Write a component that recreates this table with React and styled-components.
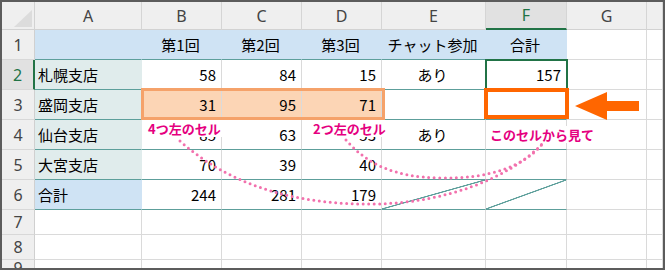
import React from "react";
import styled, { createGlobalStyle } from "styled-components";

const BLUE = "#cfe3f4";
const GRAYTEAL = "#e0ecec";
const ORANGE_FILL = "#fcd5b5";
const TEAL = "#5d9f9b";
const GRID = "#dadada";
const PINK = "#e5007f";

const GlobalStyle = createGlobalStyle`
  html, body { margin: 0; padding: 0; background: #fff; }
  body { width: 665px; height: 270px; overflow: hidden; }
`;

const Frame = styled.div`
  position: relative;
  width: 665px;
  height: 270px;
  box-sizing: border-box;
  border: 2px solid #5c5c5c;
  overflow: hidden;
  background: #fff;
  font-family: "Noto Sans CJK JP", "Noto Sans", sans-serif;
`;

const Sheet = styled.div`
  display: grid;
  grid-template-columns: 33px 107px 80px 80px 80px 104px 81px 80px 1fr;
  grid-template-rows: 28px repeat(6, 30px) 25px 25px 1fr;
  height: 100%;
`;

const Corner = styled.div`
  box-sizing: border-box;
  background: #efefef;
  border-right: 1px solid #d2d2d2;
  border-bottom: 1px solid #d2d2d2;
  display: flex;
  align-items: flex-end;
  justify-content: flex-end;
  padding: 0 2px 2px 0;
`;

const ColHead = styled.div`
  box-sizing: border-box;
  background: ${(p) => (p.$active ? "#e1e1e1" : "#efefef")};
  border-right: 1px solid #d5d5d5;
  border-bottom: ${(p) => (p.$active ? "2px solid #217346" : "1px solid #d2d2d2")};
  color: ${(p) => (p.$active ? "#217346" : "#444")};
  display: flex;
  align-items: center;
  justify-content: center;
  font-family: "Noto Sans", sans-serif;
  font-size: 16px;
  line-height: 1;
`;

const RowHead = styled.div`
  box-sizing: border-box;
  background: ${(p) => (p.$active ? "#e1e1e1" : "#efefef")};
  border-right: ${(p) => (p.$active ? "2px solid #217346" : "1px solid #d0d0d0")};
  border-bottom: 1px solid #d8d8d8;
  color: ${(p) => (p.$active ? "#217346" : "#444")};
  display: flex;
  align-items: center;
  justify-content: center;
  font-family: "Noto Sans", sans-serif;
  font-size: 16px;
  line-height: 1;
`;

const Cell = styled.div`
  position: relative;
  z-index: ${(p) => (p.$selected ? 2 : "auto")};
  box-sizing: border-box;
  background-color: ${(p) => p.$bg || "#fff"};
  background-image: ${(p) =>
    p.$diag
      ? `linear-gradient(to top left, transparent calc(50% - 0.9px), ${TEAL} calc(50% - 0.4px), ${TEAL} calc(50% + 0.4px), transparent calc(50% + 0.9px))`
      : "none"};
  border-right: 1px solid ${(p) => p.$vr || GRID};
  border-bottom: 1px solid ${(p) => p.$hr || GRID};
  outline: ${(p) => (p.$selected ? "2px solid #217346" : "none")};
  outline-offset: -1px;
  display: flex;
  align-items: center;
  justify-content: ${(p) => p.$align || "flex-start"};
  padding: 0 5px 1px 3px;
  font-size: 15px;
  line-height: 1;
  color: #000;
  white-space: nowrap;
`;

const Box = styled.div`
  position: absolute;
  z-index: 3;
  box-sizing: border-box;
  pointer-events: none;
  border: ${(p) => p.$w}px solid ${(p) => p.$color};
`;

const Label = styled.div`
  position: absolute;
  z-index: 5;
  background: #fff;
  color: ${PINK};
  font-family: "Noto Sans CJK JP", sans-serif;
  font-weight: 700;
  font-size: 13px;
  line-height: 17px;
  padding: 0 2px;
  white-space: nowrap;
`;

const Overlay = styled.svg`
  position: absolute;
  z-index: 4;
  left: 0;
  top: 0;
  pointer-events: none;
`;

const ArrowSvg = styled.svg`
  position: absolute;
  z-index: 4;
  left: 570px;
  top: 88px;
`;

const cols = ["A", "B", "C", "D", "E", "F", "G", "H"];

const data = [
  ["", "第1回", "第2回", "第3回", "チャット参加", "合計"],
  ["札幌支店", "58", "84", "15", "あり", "157"],
  ["盛岡支店", "31", "95", "71", "", ""],
  ["仙台支店", "85", "63", "53", "あり", ""],
  ["大宮支店", "70", "39", "40", "", ""],
  ["合計", "244", "281", "179", "", ""],
];

function cellSpec(r, c) {
  const inTable = r <= 6 && c <= 5;
  if (!inTable) return { text: "" };
  const text = data[r - 1][c];
  const spec = { text, hr: TEAL };
  if (r === 1) {
    spec.bg = BLUE;
    spec.vr = BLUE;
    spec.align = "center";
    return spec;
  }
  if (c === 0) {
    spec.bg = r === 6 ? BLUE : GRAYTEAL;
    spec.vr = spec.bg;
    spec.align = "flex-start";
    return spec;
  }
  spec.align = c === 4 ? "center" : "flex-end";
  if (r === 3 && c >= 1 && c <= 3) spec.bg = ORANGE_FILL;
  if (r === 6 && (c === 4 || c === 5)) spec.diag = true;
  if (r === 2 && c === 5) spec.selected = true;
  return spec;
}

export default function App() {
  const rows = [1, 2, 3, 4, 5, 6, 7, 8, 9];
  return (
    <>
      <GlobalStyle />
      <Frame>
        <Sheet>
          <Corner>
            <svg width="18" height="17" viewBox="0 0 18 17">
              <polygon points="18,0 18,17 0,17" fill="#dcdcdc" />
            </svg>
          </Corner>
          {cols.map((h) => (
            <ColHead key={h} $active={h === "F"}>
              {h === "H" ? "" : h}
            </ColHead>
          ))}
          {rows.map((r) => (
            <React.Fragment key={r}>
              <RowHead $active={r === 2}>{r}</RowHead>
              {cols.map((_, c) => {
                const s = cellSpec(r, c);
                return (
                  <Cell
                    key={c}
                    $bg={s.bg}
                    $vr={s.vr}
                    $hr={s.hr}
                    $align={s.align}
                    $diag={s.diag}
                    $selected={s.selected}
                  >
                    {s.text}
                  </Cell>
                );
              })}
            </React.Fragment>
          ))}
        </Sheet>

        <Box $w={3} $color="#f5a26a" style={{ left: 139, top: 86, width: 244, height: 32 }} />
        <Box $w={4} $color="#ff6600" style={{ left: 482, top: 86, width: 85, height: 31 }} />

        <Overlay width="661" height="266" viewBox="2 2 661 266">
          <g
            fill="none"
            stroke="#f271ad"
            strokeWidth="3"
            strokeLinecap="round"
            strokeDasharray="0 5.5"
          >
            <path d="M180 141 C 235 190, 305 205, 375 204 C 445 203, 510 178, 543 143" />
            <path d="M346 140 C 368 165, 395 177, 440 178 C 490 179, 525 166, 543 143" />
          </g>
        </Overlay>

        <Label style={{ left: 144, top: 118 }}>4つ左のセル</Label>
        <Label style={{ left: 309, top: 118 }}>2つ左のセル</Label>
        <Label style={{ left: 486, top: 124 }}>このセルから見て</Label>

        <ArrowSvg width="70" height="32" viewBox="0 0 70 32">
          <polygon points="3,16 35,2 35,11 67,11 67,21 35,21 35,30" fill="#ff6600" />
        </ArrowSvg>
      </Frame>
    </>
  );
}
